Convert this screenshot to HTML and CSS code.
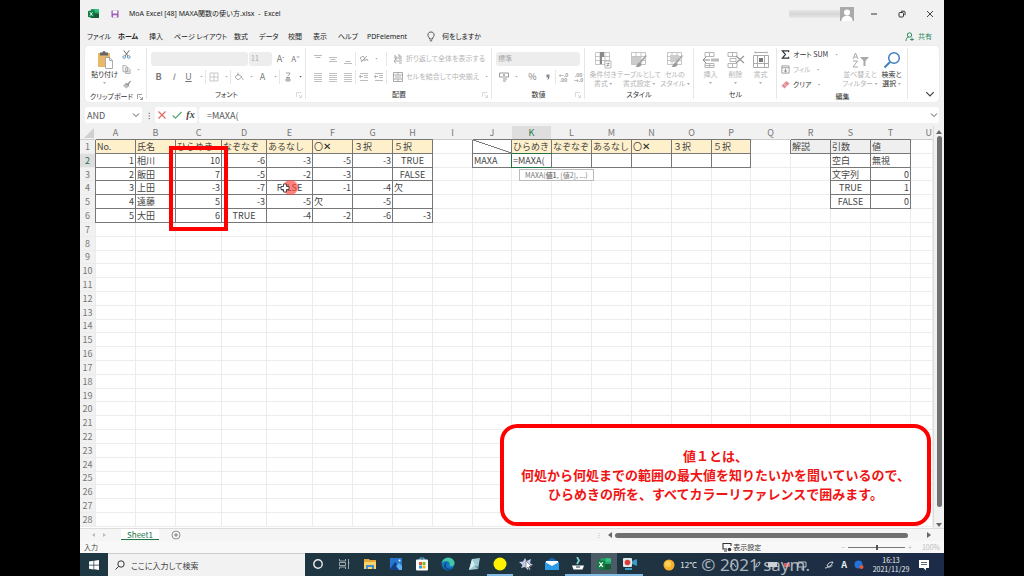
FILE: index.html
```html
<!DOCTYPE html>
<html lang="ja">
<head>
<meta charset="utf-8">
<title>MoA Excel [48] MAXA関数の使い方.xlsx - Excel</title>
<link rel="stylesheet" href="styles.css">
</head>
<body>
<svg class="defs" aria-hidden="true">
  <symbol id="xl" viewBox="0 0 12 12"><rect x="3" y="1" width="9" height="10" rx="1" fill="#21a366"/><path d="M3 6h9v4a1 1 0 0 1-1 1H4a1 1 0 0 1-1-1z" fill="#185c37"/><path d="M7.500 1H11a1 1 0 0 1 1 1v2H7.500z" fill="#33c481"/><rect y="3" width="7" height="7" rx="1" fill="#107c41"/><path d="M2 4.500l3 4M5 4.500l-3 4" stroke="#fff" stroke-width="1"/></symbol>
  <symbol id="launch" viewBox="0 0 6 6"><path d="M.5 5V.5H5M2.500 2.500l3 3M5.500 3v2.500H3" fill="none" stroke="currentColor" stroke-width=".7"/></symbol>
  <symbol id="chev" viewBox="0 0 8 8"><path d="M1 2.500l3 3 3-3" fill="none" stroke="currentColor"/></symbol>
  <symbol id="lines" viewBox="0 0 10 10"><path d="M1 1.500h8M1 3.500h8M1 5.500h8M1 7.500h8M1 9.500h8" stroke="currentColor" stroke-width=".8"/></symbol>
  <symbol id="vtop" viewBox="0 0 10 10"><path d="M1 1.500h8M2.500 3.500h5" stroke="currentColor" stroke-width=".9"/></symbol>
  <symbol id="vmid" viewBox="0 0 10 10"><path d="M1 3.500h8M2.500 5.500h5M1 7.500h8" stroke="currentColor" stroke-width=".9"/></symbol>
  <symbol id="vbot" viewBox="0 0 10 10"><path d="M2.500 7.500h5M1 9.500h8" stroke="currentColor" stroke-width=".9"/></symbol>
  <symbol id="indent" viewBox="0 0 10 10"><path d="M1 1.500h8M5 3.500h4M5 5.500h4M1 8.500h8" stroke="currentColor" stroke-width=".9"/><path d="M0 4.500h4M2 2.800L.3 4.500 2 6.200" stroke="currentColor" fill="none"/></symbol>
  <symbol id="gridic" viewBox="0 0 18 18"><path d="M1.500 1.500h14v12h-14zM1.500 5.500h14M1.500 9.500h14M6 1.500v12M11 1.500v12" fill="none" stroke="#b8b8b8" stroke-width=".8"/></symbol>
  <symbol id="brush" viewBox="0 0 18 18"><path d="M17 5l-6 7-2 1 1-3 6-6z" fill="#a9a9a9"/><path d="M9.500 11.500c-2 0-2 3-4 4 3 1.500 6 0 6-2.500z" fill="#999"/></symbol>
</svg>
<main class="window">
  <header class="titlebar">
    <svg class="logo"><use href="#xl"/></svg>
    <button class="save" aria-label="上書き保存"><svg viewBox="0 0 9 9"><path d="M.5.500h8v8h-7l-1-1z" fill="#a060b8"/><path d="M2 .5h5v3.500H2zM2.500 6h4v2.500h-4z" fill="#fff"/></svg></button>
    <h1>MoA Excel [48] MAXA関数の使い方.xlsx&nbsp; -&nbsp; Excel</h1>
    <span class="user"></span>
    <svg class="avatar" viewBox="0 0 14 14"><path d="M0 0h14v14H0z" fill="#aaa"/><circle cx="7" cy="5.500" r="3" fill="#fff"/><path d="M1.500 14c0-7 11-7 11 0z" fill="#fff"/></svg>
    <div class="winbtns">
      <button aria-label="最小化"><svg viewBox="0 0 8 8"><path d="M1 4h6" stroke="#333"/></svg></button>
      <button aria-label="元に戻す"><svg viewBox="0 0 8 8"><rect x="1" y="2.500" width="4.500" height="4.500" rx="1" fill="none" stroke="#333"/><path d="M3 1.200h3q1 0 1 1v3" fill="none" stroke="#333"/></svg></button>
      <button aria-label="閉じる"><svg viewBox="0 0 8 8"><path d="M1 1l6 6M7 1L1 7" stroke="#333" stroke-width=".9"/></svg></button>
    </div>
  </header>
  <nav class="tabs">
    <button>ファイル</button><button class="on">ホーム</button><button>挿入</button><button>ページ レイアウト</button><button>数式</button><button>データ</button><button>校閲</button><button>表示</button><button>ヘルプ</button><button>PDFelement</button>
    <button class="tell"><svg viewBox="0 0 8 11"><path d="M2.500 8V7C0 5 .5 1 4 1s4 4 1.500 6v1zM2.800 9.800h2.400" fill="none" stroke="#444" stroke-width=".9"/></svg>何をしますか</button>
    <button class="share"><svg viewBox="0 0 9 9"><circle cx="4.500" cy="3" r="2.200" fill="none" stroke="#2c8a62"/><path d="M1 9c0-3 1.500-4 3-4M5 7.500h4M7 5.500v4" fill="none" stroke="#2c8a62" stroke-width=".9"/></svg>共有</button>
  </nav>

  <section class="ribbon">
    <div class="group clip">
      <div class="body">
        <button class="big dark"><svg viewBox="0 0 18 18"><rect x="2" y="2" width="12" height="14" fill="#e9b96a"/><path d="M4 1.500h8v3H4z" fill="#666"/><circle cx="8" cy="1.500" r="1.500" fill="#666"/><path d="M9.500 6.500h4l3 3v8h-7z" fill="#fff" stroke="#999" stroke-width=".8"/><path d="M13.500 6.500v3h3" fill="none" stroke="#999" stroke-width=".8"/></svg><span>貼り付け</span><i class="caret"></i></button>
        <div class="stack">
          <button aria-label="切り取り"><svg viewBox="0 0 10 10"><path d="M2 .5l4.500 6M8 .5l-4.500 6" stroke="#555"/><circle cx="2.500" cy="7.800" r="1.500" fill="none" stroke="#5b8fc0"/><circle cx="7.500" cy="7.800" r="1.500" fill="none" stroke="#5b8fc0"/></svg></button>
          <button aria-label="コピー"><svg viewBox="0 0 10 10"><path d="M1 .5h3l2 2v5H1zM4 3h3l2 2v4.500H4z" fill="#f4f4f4" stroke="#999" stroke-width=".8"/><path d="M5 6h3M5 7.500h3" stroke="#999" stroke-width=".6"/></svg><i class="caret"></i></button>
          <button aria-label="書式のコピー"><svg viewBox="0 0 10 10"><path d="M9.500 1L6 4.500l1 1z" fill="#999" stroke="#999"/><path d="M4 3.500l4 3-3 3L1 6.500z" fill="#bbb"/><path d="M4 3.500l4 3" stroke="#777"/></svg></button>
        </div>
      </div>
      <footer>クリップボード<svg><use href="#launch"/></svg></footer>
    </div>
    <div class="group font">
      <div class="body rows">
        <div class="row">
          <select class="combo fontname" aria-label="フォント" disabled><option></option></select>
          <select class="combo fontsize" aria-label="サイズ" disabled><option>11</option></select>
          <button class="letter">A<sup>ˆ</sup></button><button class="letter small">A<sup>ˇ</sup></button>
        </div>
        <div class="row">
          <button class="letter"><b>B</b></button><button class="letter"><em>I</em></button><button class="letter"><u>U</u></button><i class="caret"></i><i class="sep"></i>
          <button class="ic" aria-label="罫線"><svg viewBox="0 0 10 10"><path d="M1 1h8v8H1zM5 1v8M1 5h8" fill="none" stroke="#bbb" stroke-width=".8"/></svg></button><i class="caret"></i><i class="sep"></i>
          <button class="ic" aria-label="塗りつぶし"><svg viewBox="0 0 10 10"><path d="M4 2l4 3-4 3-3-3zM4 .5V4M8.500 6q1 2 0 2" fill="none" stroke="#aaa"/></svg></button><i class="caret"></i>
          <button class="letter">A</button><i class="caret"></i><i class="sep"></i>
          <button class="ic" aria-label="ふりがな"><svg viewBox="0 0 10 10"><path d="M3 1h4Q7 3 4.500 4M3 5.500h4M3 9V7h4v2zM5 5v4" fill="none" stroke="#999" stroke-width=".9"/></svg></button><i class="caret dk"></i>
        </div>
      </div>
      <footer>フォント<svg class="dim"><use href="#launch"/></svg></footer>
    </div>
    <div class="group align">
      <div class="body rows">
        <div class="row">
          <button class="ic" aria-label="上揃え"><svg><use href="#vtop"/></svg></button><button class="ic" aria-label="上下中央"><svg><use href="#vmid"/></svg></button><button class="ic" aria-label="下揃え"><svg><use href="#vbot"/></svg></button><i class="sep"></i>
          <button class="ic" aria-label="方向"><svg viewBox="0 0 10 10"><path d="M2 8l6-6M1 4l3-2 2 3-3 2zM5 7l3-2 1 2" fill="none" stroke="#aaa"/></svg></button><i class="caret wide"></i><i class="sep"></i>
          <button class="text"><svg viewBox="0 0 10 10"><path d="M2 1v4h2V3H2M6 0v5h2V2H6M1 7h6q2 0 2-1M3 5L1 7l2 2.500M6 9h3" fill="none" stroke="#aaa"/></svg>折り返して全体を表示する</button>
        </div>
        <div class="row">
          <button class="ic" aria-label="左揃え"><svg><use href="#lines"/></svg></button><button class="ic" aria-label="中央揃え"><svg><use href="#lines"/></svg></button><button class="ic" aria-label="右揃え"><svg><use href="#lines"/></svg></button><i class="sep"></i>
          <button class="ic" aria-label="インデントを減らす"><svg><use href="#indent"/></svg></button><button class="ic" aria-label="インデントを増やす"><svg><use href="#indent"/></svg></button><i class="sep"></i>
          <button class="text"><svg viewBox="0 0 10 10"><path d="M.5.500h9v9h-9zM.5 3h9M.5 7h9M5 0v3M5 7v3M2 5h6" fill="none" stroke="#aaa"/></svg>セルを結合して中央揃え<i class="caret"></i></button>
        </div>
      </div>
      <footer>配置<svg class="dim"><use href="#launch"/></svg></footer>
    </div>
    <div class="group number">
      <div class="body rows">
        <div class="row"><select class="combo fmt" aria-label="表示形式" disabled><option>標準</option></select></div>
        <div class="row">
          <button class="ic" aria-label="通貨"><svg viewBox="0 0 10 10"><path d="M.5 1h9v4h-9zM4 7h4M4 9h3" fill="none" stroke="#999"/><circle cx="5" cy="3" r="1" fill="#999"/></svg></button><i class="caret wide"></i>
          <button class="letter">%</button><button class="ic" aria-label="桁区切り"><svg viewBox="0 0 10 10"><path d="M3.500 2.500h3v2.500q0 2.500-2.500 3 1-1 1-2.500H3.500z" fill="#888"/></svg></button><i class="sep"></i>
          <button class="dec">←.0<br>.00</button><button class="dec">.00<br>→.0</button>
        </div>
      </div>
      <footer>数値<svg class="dim"><use href="#launch"/></svg></footer>
    </div>
    <div class="group styles">
      <div class="body">
        <button class="big"><svg viewBox="0 0 18 18"><use href="#gridic"/><path d="M6 1h4v5h-2v7H6z" fill="#888"/><path d="M11 10h6v7h-6z" fill="#fff" stroke="#aaa" stroke-width=".8"/><path d="M12.500 12.500h3M12.500 14.500h3M15 11.500l-2 4" stroke="#888" stroke-width=".7"/></svg><span>条件付き<br>書式 <i class="caret"></i></span></button>
        <button class="big"><svg viewBox="0 0 18 18"><use href="#gridic"/><path d="M2 6h9v7H2z" fill="#ccc"/><use href="#brush"/></svg><span>テーブルとして<br>書式設定 <i class="caret"></i></span></button>
        <button class="big"><svg viewBox="0 0 18 18"><use href="#gridic"/><path d="M4 4h9v7H4z" fill="#ccc"/><use href="#brush"/></svg><span>セルの<br>スタイル <i class="caret"></i></span></button>
      </div>
      <footer>スタイル</footer>
    </div>
    <div class="group cells">
      <div class="body">
        <button class="big"><svg viewBox="0 0 18 18"><path d="M3 1.500h9v4H3zM7.500 1.500v4M3 12.500h9v4H3zM7.500 12.500v4M3 14.500h9" fill="none" stroke="#b5b5b5"/><path d="M9 7.500h8v3H9z" fill="#bbb"/><path d="M1 9h7M4 6L1 9l3 3" fill="none" stroke="#888"/></svg><span>挿入</span><i class="caret"></i></button>
        <button class="big"><svg viewBox="0 0 18 18"><path d="M1 1.500h9v4H1zM5.500 1.500v4M1 12.500h9v4H1zM5.500 12.500v4M3 7.500h6v3H3z" fill="none" stroke="#b5b5b5"/><path d="M9 5l8 7M17 5l-8 7" stroke="#999" stroke-width="1.200"/></svg><span>削除</span><i class="caret"></i></button>
        <button class="big"><svg viewBox="0 0 18 18"><path d="M3 1.500h12M3 .5v2M15 .5v2M1.500 4.500h15v12h-15zM1.500 12.500h15M5.500 4.500v12M12.500 4.500v12" fill="none" stroke="#aaa"/><path d="M7 7h4v4H7z" fill="#777"/></svg><span>書式</span><i class="caret"></i></button>
      </div>
      <footer>セル</footer>
    </div>
    <div class="group edit">
      <div class="body">
        <div class="stack">
          <button class="dark"><svg viewBox="0 0 10 10"><path d="M8.500 2.500V1H1.500L5 5 1.500 9h7V7.500" fill="none" stroke="#333" stroke-width="1.300"/></svg>オート SUM<i class="caret wide"></i></button>
          <button><svg viewBox="0 0 10 10"><path d="M1 1h8v8H1zM1 3h8" fill="none" stroke="#999"/><path d="M5 4v4M3.500 6L5 8l1.500-2" fill="none" stroke="#888"/></svg>フィル<i class="caret"></i></button>
          <button class="dark"><svg viewBox="0 0 10 10"><path d="M6 1l3.500 3L4 9.500.5 6.500z" fill="#e58c98"/><path d="M3 4l3.500 3.500" stroke="#fff" stroke-width=".6"/></svg>クリア<i class="caret"></i></button>
        </div>
        <button class="big"><svg viewBox="0 0 18 18"><path d="M2 8l2.500-6L7 8M3 6h3M2 10h4.500L2 16h5" fill="none" stroke="#aaa"/><path d="M9 6h9l-3.500 4v5h-2v-5z" fill="#aaa"/></svg><span>並べ替えと<br>フィルター <i class="caret"></i></span></button>
        <button class="big dark"><svg viewBox="0 0 18 18"><circle cx="11" cy="7" r="5.300" fill="#fff" stroke="#3f7fbf" stroke-width="1.500"/><path d="M7 11l-5.500 5.500" stroke="#3f7fbf" stroke-width="2"/></svg><span>検索と<br>選択 <i class="caret"></i></span></button>
      </div>
      <footer>編集</footer>
    </div>
    <button class="collapse" aria-label="リボンを折りたたむ"><svg><use href="#chev"/></svg></button>
  </section>

  <section class="formula">
    <label class="namebox"><select aria-label="名前ボックス"><option>AND</option></select><svg><use href="#chev"/></svg></label>
    <span class="grip">⁝</span>
    <div class="fx">
      <button aria-label="キャンセル"><svg viewBox="0 0 10 10"><path d="M1.500 1.500l7 7M8.500 1.500l-7 7" stroke="#d9685c" stroke-width="1.100"/></svg></button>
      <button aria-label="入力"><svg viewBox="0 0 10 10"><path d="M.8 5.500L3.500 8.200 9.500 2" fill="none" stroke="#4fa376" stroke-width="1.200"/></svg></button>
      <button class="fn">fx</button>
    </div>
    <label class="entry"><input value="=MAXA(" aria-label="数式バー"><svg><use href="#chev"/></svg></label>
  </section>

  <section class="sheet">
    <div class="gridwrap">
      <table>
        <colgroup><col class="rh"><col class="m"><col class="m"><col class="w"><col class="d"><col class="w"><col class="m"><col class="m"><col class="m"><col class="m"><col class="s"><col class="m"><col class="m"><col class="m"><col class="m"><col class="m"><col class="s"><col class="m"><col class="m"><col class="m"><col class="m"><col></colgroup>
        <thead><tr><th class="corner"><svg viewBox="0 0 10 10"><path d="M10 0v10H0z" fill="#d0d0d0"/></svg></th><th>A</th><th>B</th><th>C</th><th>D</th><th>E</th><th>F</th><th>G</th><th>H</th><th>I</th><th>J</th><th class="sel">K</th><th>L</th><th>M</th><th>N</th><th>O</th><th>P</th><th>Q</th><th>R</th><th>S</th><th>T</th><th class="u">U</th></tr></thead>
        <tbody>
          <tr><th>1</th><td class="b y">No.</td><td class="b y">氏名</td><td class="b y">ひらめき</td><td class="b y">なぞなぞ</td><td class="b y">あるなし</td><td class="b y">〇<b>✕</b></td><td class="b y">３択</td><td class="b y">５択</td><td></td><td class="b diag"></td><td class="b y">ひらめき</td><td class="b y">なぞなぞ</td><td class="b y">あるなし</td><td class="b y">〇<b>✕</b></td><td class="b y">３択</td><td class="b y">５択</td><td></td><td class="b g">解説</td><td class="b g">引数</td><td class="b g">値</td></tr>
          <tr><th class="sel">2</th><td class="b n">1</td><td class="b">相川</td><td class="b n">10</td><td class="b n">-6</td><td class="b n">-3</td><td class="b n">-5</td><td class="b n">-3</td><td class="b c">TRUE</td><td></td><td class="b">MAXA</td><td class="b active">=MAXA(</td><td class="b"></td><td class="b"></td><td class="b"></td><td class="b"></td><td class="b"></td><td></td><td></td><td class="b">空白</td><td class="b">無視</td></tr>
          <tr><th>3</th><td class="b n">2</td><td class="b">飯田</td><td class="b n">7</td><td class="b n">-5</td><td class="b n">-2</td><td class="b n">-3</td><td class="b"></td><td class="b c">FALSE</td><td></td><td></td><td></td><td></td><td></td><td></td><td></td><td></td><td></td><td></td><td class="b">文字列</td><td class="b n">0</td></tr>
          <tr><th>4</th><td class="b n">3</td><td class="b">上田</td><td class="b n">-3</td><td class="b n">-7</td><td class="b c">FALSE</td><td class="b n">-1</td><td class="b n">-4</td><td class="b">欠</td><td></td><td></td><td></td><td></td><td></td><td></td><td></td><td></td><td></td><td></td><td class="b c">TRUE</td><td class="b n">1</td></tr>
          <tr><th>5</th><td class="b n">4</td><td class="b">遠藤</td><td class="b n">5</td><td class="b n">-3</td><td class="b n">-5</td><td class="b">欠</td><td class="b n">-5</td><td class="b"></td><td></td><td></td><td></td><td></td><td></td><td></td><td></td><td></td><td></td><td></td><td class="b c">FALSE</td><td class="b n">0</td></tr>
          <tr><th>6</th><td class="b n">5</td><td class="b">大田</td><td class="b n">6</td><td class="b c">TRUE</td><td class="b n">-4</td><td class="b n">-2</td><td class="b n">-6</td><td class="b n">-3</td></tr>
        </tbody>
      </table>
      <div class="redbox"></div>
      <div class="tip">MAXA(<b>値1</b>, [値2], ...)</div>
      <div class="click"></div>
      <svg class="cursor" viewBox="0 0 10 10"><path d="M3.500 1h3v2.500H9v3H6.500V9h-3V6.500H1v-3h2.500z" fill="#fff" stroke="#444"/></svg>
      <aside class="callout">値１とは、<br>何処から何処までの範囲の最大値を知りたいかを聞いているので、<br>ひらめきの所を、すべてカラーリファレンスで囲みます。</aside>
    </div>
    <div class="vscroll"><i class="up"></i><i class="thumb"></i><i class="down"></i></div>
  </section>

  <section class="sheetbar">
    <span class="nav"><i class="l"></i><i class="r"></i></span>
    <button class="tab">Sheet1</button>
    <button class="add" aria-label="新しいシート"><svg viewBox="0 0 10 10"><circle cx="5" cy="5" r="4" fill="none" stroke="#777" stroke-width=".8"/><path d="M3 5h4M5 3v4" stroke="#777" stroke-width=".9"/></svg></button>
    <span class="dots">⁝</span>
    <div class="hscroll"><i class="l"></i><i class="thumb"></i><i class="r"></i></div>
  </section>
  <section class="status">
    <span>入力</span>
    <button class="disp"><svg viewBox="0 0 10 10"><path d="M5 7H1V1.500h8V4M2 9h3" fill="none" stroke="#333" stroke-width="1.100"/><circle cx="7.500" cy="7.500" r="1.800" fill="#333"/></svg>表示設定</button>
    <span class="minus">−</span><input type="range" min="10" max="190" value="100" aria-label="ズーム"><span class="minus">+</span><span class="pct">100%</span>
  </section>

  <footer class="taskbar">
    <button class="start" aria-label="スタート"><svg viewBox="0 0 10 10"><path d="M0 1.500l4.500-.7v4H0zM5.200.7L10 0v4.800H5.200zM0 5.400h4.500v4L0 8.700zM5.200 5.400H10v4.600l-4.800-.7z" fill="#fff"/></svg></button>
    <label class="find"><svg viewBox="0 0 10 10"><circle cx="6" cy="4" r="3.200" fill="none" stroke="#333"/><path d="M3.700 6.300L.5 9.500" stroke="#333"/></svg><input placeholder="ここに入力して検索" aria-label="検索"></label>
    <div class="apps">
      <button aria-label="Cortana"><svg viewBox="0 0 14 14"><circle cx="7" cy="7" r="4.200" fill="none" stroke="#eee" stroke-width="1.400"/></svg></button>
      <button aria-label="タスクビュー"><svg viewBox="0 0 14 14"><path d="M2.500 2v2h6V2M2.500 12v-2h6v2M2.500 5.500h6v3h-6zM11.500 2v10M11 6h1.500" fill="none" stroke="#aab4b8" stroke-width=".9"/></svg></button>
      <button aria-label="エクスプローラー"><svg viewBox="0 0 14 14"><path d="M1 2h5l1 1h6v9H1z" fill="#e3a93a"/><path d="M1 5h12v7H1z" fill="#fbd36b"/><path d="M3 12V8h8v4H9v-2H5v2z" fill="#3f8fd6"/></svg></button>
      <button aria-label="フォト"><svg viewBox="0 0 14 14"><rect x="1" y="1" width="12" height="12" fill="#2877cf"/><path d="M1 12l5-7 7 8H1z" fill="#123f85"/><path d="M7 9l3-3 3 3v4h-3z" fill="#5eb0ef"/><circle cx="10.500" cy="3.500" r="1" fill="#fff"/></svg></button>
      <button aria-label="Store"><svg viewBox="0 0 14 14"><path d="M5 3V1h4v2" fill="none" stroke="#58b8e8"/><rect x="1" y="2.500" width="12" height="11" rx="1" fill="#fff"/><path d="M4 5h3v3H4z" fill="#e8562a"/><path d="M7.500 5h3v3h-3z" fill="#7db82c"/><path d="M4 8.500h3v3H4z" fill="#2f9fe0"/><path d="M7.500 8.500h3v3h-3z" fill="#f2b51c"/></svg></button>
      <button aria-label="Edge"><svg viewBox="0 0 14 14"><circle cx="7" cy="7" r="6.500" fill="#1674bd"/><path d="M.7 6C2-1 13-1 13.500 6c0 4-5 4-5 2 1-2-1-4-3-4S1 5 .7 6z" fill="#42c7a3"/><path d="M5 7c-1 4 3 6 7 4-3 4-9 2-9-2 0-2 1-3 3-4z" fill="#0b4a8c"/></svg></button>
      <button aria-label="メモ帳"><svg viewBox="0 0 14 14"><path d="M5 2l8-1-2 11-9 1z" fill="#9cc9d2"/><path d="M5 2l3 6-6 5z" fill="#d7ecef"/><path d="M11 12l1-2-4-1z" fill="#57808d"/></svg></button>
      <button class="run" aria-label="ペン"><svg viewBox="0 0 14 14"><circle cx="7" cy="7" r="6.500" fill="#fff200"/></svg></button>
      <button aria-label="スター"><svg viewBox="0 0 14 14"><path d="M6 1l1.500 3L12 2l-1 4 3 2-4 1-1 4-3-3-4 1 1.500-3L0 5l4-.5z" fill="#c3cde8"/><path d="M7 4v8l2-2 1.500 3 1-.5L10 9.500h2.500z" fill="#fff" stroke="#444" stroke-width=".5"/></svg></button>
      <button aria-label="メール"><svg viewBox="0 0 14 14"><path d="M0 5l7-4.500L14 5v8H0z" fill="#1665b0"/><path d="M1 4h12v6H1z" fill="#fff"/><path d="M0 5l7 4 7-4v8H0z" fill="#2c9ce8"/></svg></button>
      <button class="run" aria-label="ダウンロード"><svg viewBox="0 0 14 14"><path d="M6 0l2 3.500L6 7" fill="none" stroke="#7fd0cf" stroke-width="1.800"/><path d="M1 8.500h12l-1.500 4h-9z" fill="#fff"/><path d="M5 10h4" stroke="#234"/></svg></button>
      <button class="run cur" aria-label="Excel"><svg viewBox="0 0 12 12"><use href="#xl"/></svg></button>
      <button class="run" aria-label="録画"><svg viewBox="0 0 14 14"><rect x="0" y="1" width="9" height="9" rx="1" fill="#dbe9ee"/><path d="M9 4l5-2v7l-5-2z" fill="#3a9cc4"/><circle cx="4.500" cy="5.500" r="2.800" fill="#e23a35"/><path d="M2 12h7" stroke="#3a9cc4" stroke-width="2"/></svg></button>
    </div>
    <div class="tray">
      <svg class="sun" viewBox="0 0 12 12"><circle cx="6" cy="6" r="5.500" fill="#f7b22c"/><circle cx="5" cy="5" r="3" fill="#fdd05c"/></svg><span>12°C</span>
      <svg class="mid" viewBox="0 0 113 14"><path d="M26 9l3-4 3 4M51 9c3 0 5-2 5-5-3 0-4 3-4 5M94 4h8v5h-8zM97 11h3" fill="none" stroke="#b8c2cc"/><path d="M64 4h9v5h-9z" fill="#cdd3d9"/><path d="M80 5h6v4h-6z" fill="#cf5960"/></svg>
      <svg viewBox="0 0 10 10"><path d="M1 8c3 0 7-3 8-6-3 0-5 1-6 4l2 1c2 0 3-1 3-2" fill="none" stroke="#cfd6dd"/></svg>
      <b>A</b>
      <svg viewBox="0 0 10 10"><circle cx="4.500" cy="4.500" r="4" fill="#2573d8"/><circle cx="7.500" cy="7" r="2" fill="#e35b35"/></svg>
      <time>16:13<br>2021/11/29</time>
      <svg class="note" viewBox="0 0 12 12"><path d="M1 1h10v8H8v2.500L5.500 9H1z" fill="#fff"/><path d="M3 3.500h6M3 5.500h6" stroke="#345" stroke-width=".8"/></svg>
    </div>
    <span class="mark">© 2021 saym.</span>
  </footer>
</main>
<script src="grid.js"></script>
</body>
</html>
```
FILE: grid.js
```js
// Pads the worksheet with blank cells out to column U and row 28.
const body = document.querySelector("tbody");
while (body.rows.length < 28) {
  const th = document.createElement("th");
  th.textContent = body.rows.length + 1;
  body.insertRow().append(th);
}
for (const row of body.rows) {
  while (row.cells.length < 22) row.insertCell();
}
```
FILE: styles.css
```css
* { box-sizing: border-box; }
html, body { height: 100%; }
body { margin: 0; padding: 0 7.8125vw; background: #000; color: #444; font: 7px/9px "Noto Sans CJK JP", sans-serif; }
.defs { position: absolute; width: 0; height: 0; }
button, input, select { margin: 0; padding: 0; border: 0; background: none; color: inherit; font: inherit; border-radius: 0; opacity: 1; }
button { display: flex; align-items: center; justify-content: center; white-space: nowrap; font-feature-settings: "palt"; }
select { appearance: none; }
svg { display: block; flex: none; width: 10px; height: 10px; }
.window { position: relative; height: 100vh; display: flex; flex-direction: column; background: #f1f1f1; overflow: hidden; }
.window > * { flex: none; }

.titlebar { height: 27px; display: flex; align-items: center; padding: 0 6px 0 8px; }
.logo { width: 11px; height: 11px; }
.save { margin: 0 10px 0 12px; }
.save svg { width: 8px; height: 8px; }
h1, .tabs { font-family: "Noto Sans", "Noto Sans CJK JP", sans-serif; }
h1 { margin: 0; font-size: 7px; font-weight: 400; color: #222; white-space: nowrap; }
.user { margin-left: auto; width: 51px; height: 8px; background: linear-gradient(#e8e8e8, #d6d6d6, #e8e8e8); }
.avatar { width: 14px; height: 14px; }
.winbtns { display: flex; margin-left: 12px; gap: 12px; }
.winbtns button { width: 16px; height: 16px; }
.winbtns svg { width: 8px; height: 8px; }

.tabs { height: 19px; display: grid; grid-template-columns: 31px 31px 25px 60px 25px 29px 25px 25px 29px 60px auto 1fr; padding: 0 12px 0 7px; align-items: center; }
.tabs button { justify-content: flex-start; color: #222; }
.tabs .on { font-weight: 700; color: #222; }
.tabs .tell { gap: 7px; }
.tell svg { width: 8px; height: 11px; }
.tabs .share { justify-self: end; gap: 4px; color: #2c8a62; }
.share svg { width: 9px; height: 9px; }

.ribbon { height: 56px; margin: 0 5px; display: flex; background: #fff; border-radius: 4px; box-shadow: 0 0 1px #ccc; color: #b4b4b4; }
.group { display: flex; flex-direction: column; padding: 3px 3px 0 4px; border-right: 1px solid #e6e6e6; margin: 2px 0 3px; flex: none; }
.clip { width: 62px; } .font { width: 159px; } .align { width: 186px; } .number { width: 93px; }
.styles { width: 109px; } .cells { width: 83px; } .edit { width: 131px; }
.group.styles { padding: 3px 0 0; }
.body { flex: 1; display: flex; gap: 2px; align-items: flex-start; }
.group footer { position: relative; flex: none; height: 9px; text-align: center; color: #333; font-feature-settings: "palt"; }
.clip footer { padding-right: 9px; }
.group footer svg { position: absolute; right: 0; top: 2px; width: 6px; height: 6px; color: #777; }
.group footer svg.dim { color: #ccc; }
.dark { color: #333; }
.caret { flex: none; display: inline-block; width: 3px; height: 2px; margin: 0 3px; background: #aaa; clip-path: polygon(0 0, 100% 0, 50% 100%); vertical-align: middle; }
.caret.wide { margin: 0 7px 0 4px; }
.caret.dk { background: #555; }
.big { flex: none; flex-direction: column; line-height: 9px; }
.big svg { width: 18px; height: 18px; margin-bottom: 1px; }
.big > .caret { margin-top: 3px; }
.clip .big { width: 31px; }
.stack { display: flex; flex-direction: column; margin-top: -4px; }
.stack button { height: 15px; gap: 3px; justify-content: flex-start; }
.stack svg { width: 9px; height: 9px; }
.styles .body { gap: 0; }
.styles .big { width: 36px; }
.cells .body { gap: 0; }
.cells .big { width: 25px; }
.edit .body { gap: 0; }
.edit .stack { width: 61px; }
.edit .big { width: 36px; }
.edit .big:last-child { width: 27px; }
.styles .caret, .edit .big .caret { margin: 0; }
.rows { flex-direction: column; gap: 3px; }
.row { display: flex; align-items: center; height: 15px; }
.combo { height: 14px; background: #ededed; border-radius: 3px; color: #aaa; padding: 0 2px; }
.fontname { width: 97px; } .fontsize { width: 23px; margin: 0 1px; } .fmt { width: 84px; }
.letter { width: 15px; height: 14px; font-size: 9px; color: #777; }
.letter.small { font-size: 8px; }
.letter sup { font-size: 6px; line-height: 1; }
.ic { width: 15px; height: 14px; }
.sep { width: 1px; height: 14px; background: #e6e6e6; flex: none; }
.font .caret { margin: 0 2px 0 4px; }
.text { gap: 3px; margin-left: 6px; }
.align .wide { margin-right: 8px; }
.dec { width: 15px; font-size: 5px; line-height: 5px; color: #999; font-weight: 700; }
.collapse { align-self: flex-end; margin: 0 4px 3px auto; color: #444; }

.formula { height: 16px; margin: 5px 5px 3px; display: flex; align-items: center; gap: 2px; color: #555; font-size: 9px; }
.formula label, .fx { height: 16px; display: flex; align-items: center; background: #fff; border-radius: 3px; }
.namebox { width: 57px; padding: 0 2px; }
.namebox select { flex: 1; min-width: 0; }
.formula label svg { width: 8px; height: 8px; }
.grip { width: 9px; text-align: center; }
.fx { width: 42px; justify-content: space-around; }
.fn { font: italic 700 10px/12px "Liberation Serif", serif; color: #444; }
.entry { flex: 1; padding: 0 1px 0 8px; }
.entry input { flex: 1; min-width: 0; }

.sheet { display: flex; flex: 1 !important; min-height: 0; }
.gridwrap { position: relative; flex: 1; min-width: 0; background: #fff; }
table { width: 100%; height: calc(100% - 1px); table-layout: fixed; border-collapse: separate; border-spacing: 0; font-size: 9px; line-height: 11px; }
.rh { width: 16px; } .m { width: 40px; } .s { width: 39px; } .w { width: 46px; } .d { width: 45px; }
th, td { padding: 0 1px; height: 13px; border-right: 1px solid #ececec; border-bottom: 1px solid #ececec; overflow: hidden; white-space: nowrap; text-align: left; }
td { color: #444; }
th { background: #f1f1f1; font-weight: 400; color: #777; text-align: center; padding: 0; }
thead th { height: 14px; border-right-color: #f1f1f1; border-bottom-color: #ccc; }
th.sel { background: #dedede; color: #217346; }
thead th.sel { border-bottom-color: #217346; }
tbody th.sel { border-right-color: #217346; }
thead .u { text-align: right; }
.corner svg { margin: 1px 0 0 4px; }
.b { border-color: #777; box-shadow: -1px 0 0 #777, 0 -1px 0 #777; }
.y { background: #fff0cc; } .g { background: #efefef; }
.y b { font: 700 10px/10px "DejaVu Sans", sans-serif; color: #222; }
.n { text-align: right; } .c { text-align: center; }
.diag { background: linear-gradient(to top right, transparent 48%, #777 49%, #777 52%, transparent 53%); }
.active { border-color: #217346; box-shadow: -1px 0 0 #217346, 0 -1px 0 #217346; }

.redbox { position: absolute; left: 89px; top: 20px; width: 59px; height: 85px; border: 4px solid #f00; }
.tip { position: absolute; left: 439px; top: 43px; padding: 0 5px; border: 1px solid #bbb; background: #fff; color: #777; line-height: 10px; white-space: nowrap; }
.click { position: absolute; left: 203px; top: 54px; width: 15px; height: 15px; border-radius: 50%; background: #ff4038; opacity: .65; }
.cursor { position: absolute; left: 200px; top: 57px; }
.callout { position: absolute; right: 2px; bottom: 2px; width: 431px; height: 102px; border: 4px solid #f00; border-radius: 17px; background: #fff; color: #f01414; font-size: 13px; font-weight: 700; line-height: 19px; text-align: center; white-space: nowrap; padding-top: 18px; }
.vscroll { width: 11px; display: flex; flex-direction: column; align-items: center; padding: 4px 0 1px; gap: 2px; border-left: 1px solid #ddd; }
.vscroll .thumb { flex: 1; width: 5px; border-radius: 3px; background: #707070; margin-bottom: 14px; }
.up, .down { width: 6px; height: 4px; background: #666; clip-path: polygon(50% 0, 100% 100%, 0 100%); }
.down { transform: rotate(180deg); }

.sheetbar { height: 13px; display: flex; align-items: center; padding: 0 13px 0 12px; border-top: 1px solid #ddd; background: #f5f5f5; }
.nav { display: flex; gap: 8px; width: 29px; }
.l, .r { width: 4px; height: 6px; background: #666; clip-path: polygon(100% 0, 100% 100%, 0 50%); }
.r { transform: rotate(180deg); }
.nav i { background: #bbb; width: 3px; height: 4px; }
.tab { width: 38px; height: 11px; align-self: flex-start; background: #fff; border-bottom: 1px solid #217346; color: #217346; font-size: 8px; }
.add { margin-left: 12px; }
.dots { margin-left: auto; color: #aaa; }
.hscroll { width: 38.5%; display: flex; align-items: center; gap: 3px; margin-left: 8px; }
.hscroll .thumb { flex: 1; height: 5px; border-radius: 3px; background: #707070; margin-right: 16px; }
.status { height: 12px; display: flex; align-items: center; padding: 0 4px; background: #f8f8f8; }
.disp { gap: 1px; color: #333; margin-left: auto; margin-right: 80px; }
.minus, .pct { color: #bbb; }
.pct { margin-left: 8px; width: 20px; text-align: right; }
.status input { appearance: none; width: 57px; height: 1px; margin: 0 3px; background: #777; }
.status input::-webkit-slider-thumb { appearance: none; width: 2px; height: 5px; background: #555; }

.taskbar { position: relative; height: 23px; display: flex; background: linear-gradient(90deg, #1e3843, #1f3440 60%, #1c2b48); color: #eee; }
.start { width: 28px; }
.find { width: 197px; display: flex; align-items: center; gap: 6px; padding-left: 7px; background: #f2f2f2; border-top: 1px solid #ccc; color: #444; }
.find input { flex: 1; min-width: 0; font-size: 8px; font-feature-settings: "palt"; }
.find input::placeholder { color: #444; opacity: 1; }
.apps { display: flex; }
.apps button { width: 26px; padding-top: 1px; border-bottom: 2px solid transparent; }
.apps svg { width: 14px; height: 14px; }
.apps .run { border-bottom-color: #7fb9e4; }
.apps .cur { background-color: #4b5c66; }
.tray { flex: 1; display: flex; align-items: center; justify-content: flex-end; gap: 7px; padding-right: 14px; font-size: 7px; }
.tray .sun { width: 12px; height: 12px; }
.tray span { font-size: 8px; margin-left: -2px; }
.tray .mid { width: 113px; height: 14px; }
.tray b { font-size: 9px; }
.tray time { text-align: center; width: 40px; }
.tray .note { width: 12px; height: 12px; }
.mark { position: absolute; right: 134px; bottom: 0; font: 17px/23px "Noto Sans", sans-serif; color: #c8ccd2; opacity: .85; }
```
